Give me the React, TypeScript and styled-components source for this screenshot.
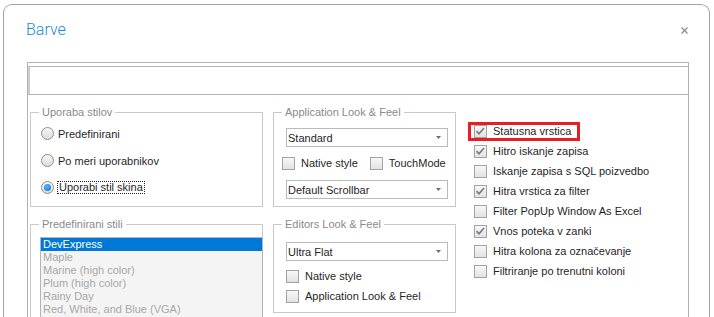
import React from 'react';
import styled, { createGlobalStyle } from 'styled-components';

const GlobalStyle = createGlobalStyle`
  html, body {
    margin: 0;
    padding: 0;
    background: #ffffff;
    overflow: hidden;
  }
  body {
    font-family: "Liberation Sans", Arial, sans-serif;
    font-size: 11px;
    color: #1f1f1f;
  }
`;

const Dialog = styled.div`
  box-sizing: border-box;
  margin: 4px 0 0 3px;
  width: 707px;
  height: 340px;
  border: 1px solid #a3a3a3;
  border-bottom: none;
  border-radius: 9px 9px 0 0;
  background: #ffffff;
`;

const Header = styled.div`
  display: flex;
  justify-content: space-between;
  align-items: flex-start;
  box-sizing: border-box;
  height: 57px;
  padding: 15px 21px 0 22px;
`;

const Title = styled.div`
  font-family: Roboto, "Liberation Sans", sans-serif;
  font-weight: 300;
  font-size: 16px;
  line-height: 20px;
  color: #1a8ad8;
`;

const CloseButton = styled.div`
  display: flex;
  margin-top: 7px;
  cursor: pointer;
`;

const Panel = styled.div`
  box-sizing: border-box;
  margin-left: 23px;
  width: 662px;
  height: 290px;
  padding-top: 3px;
  border: 1px solid #b2b2b2;
  border-bottom: none;
`;

const TopBox = styled.div`
  box-sizing: border-box;
  height: 29px;
  border-top: 1px solid #b4b4b4;
  border-bottom: 1px solid #b4b4b4;
  border-left: 2px solid #cdcdcd;
`;

const Content = styled.div`
  display: grid;
  grid-template-columns: 233px 183px 1fr;
  column-gap: 10px;
  padding: 10px 0 0 2px;
`;

const Stack = styled.div`
  display: flex;
  flex-direction: column;
  gap: 10px;
`;

const Group = styled.fieldset`
  margin: 0;
  padding: 0;
  min-width: 0;
  border: 1px solid #c9c9c9;
`;

const Legend = styled.legend`
  margin-left: 8px;
  padding: 0 3px;
  font-size: 11px;
  line-height: 14px;
  color: #8a8a8a;
`;

const GroupBody = styled.div<{ $pad: string; $stretch?: boolean }>`
  display: flex;
  flex-direction: column;
  align-items: ${(p) => (p.$stretch ? 'stretch' : 'flex-start')};
  padding: ${(p) => p.$pad};
`;

const RadioRow = styled.div`
  display: flex;
  align-items: center;
  gap: 4px;
  height: 27px;
`;

const RadioCircle = styled.span<{ $on?: boolean }>`
  box-sizing: border-box;
  display: flex;
  align-items: center;
  justify-content: center;
  width: 13px;
  height: 13px;
  border-radius: 50%;
  border: 1px solid #8e8e8e;
  background: linear-gradient(#f8f8f8, #dcdcdc);

  &::after {
    content: '';
    display: ${(p) => (p.$on ? 'block' : 'none')};
    width: 7px;
    height: 7px;
    border-radius: 50%;
    background: radial-gradient(circle at 40% 35%, #55b6ff, #0a72dc);
  }
`;

const FocusLabel = styled.span`
  outline: 1px dotted #222;
  padding: 0 1px;
  line-height: 11px;
`;

const Combo = styled.div<{ $gapBelow?: number }>`
  box-sizing: border-box;
  display: flex;
  align-items: center;
  justify-content: space-between;
  width: 162px;
  height: 19px;
  margin-bottom: ${(p) => p.$gapBelow ?? 0}px;
  padding: 0 6px 0 1px;
  border: 1px solid #bababa;
  background: #ffffff;
`;

const InlineChecks = styled.div`
  display: flex;
  align-items: center;
  gap: 12px;
  height: 20px;
  margin: 6px 0 7px -4px;
`;

const CheckRow = styled.div`
  position: relative;
  display: flex;
  align-items: center;
  gap: 6px;
  height: 20px;
  white-space: nowrap;
`;

const Box = styled.span`
  box-sizing: border-box;
  display: flex;
  width: 13px;
  height: 13px;
  border: 1px solid #a2a2a2;
  background: linear-gradient(#f8f8f8, #e2e2e2);
`;

const Highlight = styled.div`
  position: absolute;
  left: -6px;
  top: 1px;
  box-sizing: border-box;
  width: 112px;
  height: 19px;
  border: 3px solid #ec1c24;
  pointer-events: none;
`;

const ListBox = styled.div`
  box-sizing: border-box;
  margin-right: -1px;
  height: 120px;
  border: 1px solid #b4b4b4;
  background: #f4f4f4;
`;

const ListItem = styled.div<{ $selected?: boolean }>`
  padding-left: 2px;
  line-height: 13px;
  color: ${(p) => (p.$selected ? '#ffffff' : '#a8a8a8')};
  background: ${(p) => (p.$selected ? '#0078d7' : 'transparent')};
  white-space: nowrap;
`;

const OptionColumn = styled.div`
  display: flex;
  flex-direction: column;
  padding: 16px 0 0 8px;
`;

const Check = ({ checked }: { checked?: boolean }) => (
  <Box>
    {checked && (
      <svg width="11" height="11" viewBox="0 0 11 11">
        <path d="M1.5 5.2 L4 7.8 L9 2" fill="none" stroke="#7c7c7c" strokeWidth="1.7" />
      </svg>
    )}
  </Box>
);

const Arrow = () => (
  <svg width="5" height="3" viewBox="0 0 5 3">
    <polygon points="0,0 5,0 2.5,3" fill="#6e6e6e" />
  </svg>
);

const styleList = [
  'DevExpress',
  'Maple',
  'Marine (high color)',
  'Plum (high color)',
  'Rainy Day',
  'Red, White, and Blue (VGA)',
];

const options = [
  { label: 'Statusna vrstica', checked: true, marked: true },
  { label: 'Hitro iskanje zapisa', checked: true },
  { label: 'Iskanje zapisa s SQL poizvedbo' },
  { label: 'Hitra vrstica za filter', checked: true },
  { label: 'Filter PopUp Window As Excel' },
  { label: 'Vnos poteka v zanki', checked: true },
  { label: 'Hitra kolona za označevanje' },
  { label: 'Filtriranje po trenutni koloni' },
];

const App = () => {
  return (
    <>
      <GlobalStyle />
      <Dialog>
        <Header>
          <Title>Barve</Title>
          <CloseButton>
            <svg width="7" height="7" viewBox="0 0 7 7">
              <path d="M0.5 0.5 L6.5 6.5 M6.5 0.5 L0.5 6.5" stroke="#8c8c8c" strokeWidth="1.2" />
            </svg>
          </CloseButton>
        </Header>
        <Panel>
          <TopBox />
          <Content>
            <Stack>
              <Group>
                <Legend>Uporaba stilov</Legend>
                <GroupBody $pad="1px 0 5px 10px">
                  <RadioRow>
                    <RadioCircle />
                    <span>Predefinirani</span>
                  </RadioRow>
                  <RadioRow>
                    <RadioCircle />
                    <span>Po meri uporabnikov</span>
                  </RadioRow>
                  <RadioRow>
                    <RadioCircle $on />
                    <FocusLabel>Uporabi stil skina</FocusLabel>
                  </RadioRow>
                </GroupBody>
              </Group>
              <Group>
                <Legend>Predefinirani stili</Legend>
                <GroupBody $pad="6px 0 0 9px" $stretch>
                  <ListBox>
                    {styleList.map((s, i) => (
                      <ListItem key={s} $selected={i === 0}>
                        {s}
                      </ListItem>
                    ))}
                  </ListBox>
                </GroupBody>
              </Group>
            </Stack>

            <Stack>
              <Group>
                <Legend>Application Look &amp; Feel</Legend>
                <GroupBody $pad="9px 0 7px 12px">
                  <Combo>
                    <span>Standard</span>
                    <Arrow />
                  </Combo>
                  <InlineChecks>
                    <CheckRow>
                      <Check />
                      <span>Native style</span>
                    </CheckRow>
                    <CheckRow>
                      <Check />
                      <span>TouchMode</span>
                    </CheckRow>
                  </InlineChecks>
                  <Combo>
                    <span>Default Scrollbar</span>
                    <Arrow />
                  </Combo>
                </GroupBody>
              </Group>
              <Group>
                <Legend>Editors Look &amp; Feel</Legend>
                <GroupBody $pad="11px 0 6px 12px">
                  <Combo $gapBelow={5}>
                    <span>Ultra Flat</span>
                    <Arrow />
                  </Combo>
                  <CheckRow>
                    <Check />
                    <span>Native style</span>
                  </CheckRow>
                  <CheckRow>
                    <Check />
                    <span>Application Look &amp; Feel</span>
                  </CheckRow>
                </GroupBody>
              </Group>
            </Stack>

            <OptionColumn>
              {options.map((o) => (
                <CheckRow key={o.label}>
                  <Check checked={o.checked} />
                  <span>{o.label}</span>
                  {o.marked && <Highlight />}
                </CheckRow>
              ))}
            </OptionColumn>
          </Content>
        </Panel>
      </Dialog>
    </>
  );
};

export default App;
